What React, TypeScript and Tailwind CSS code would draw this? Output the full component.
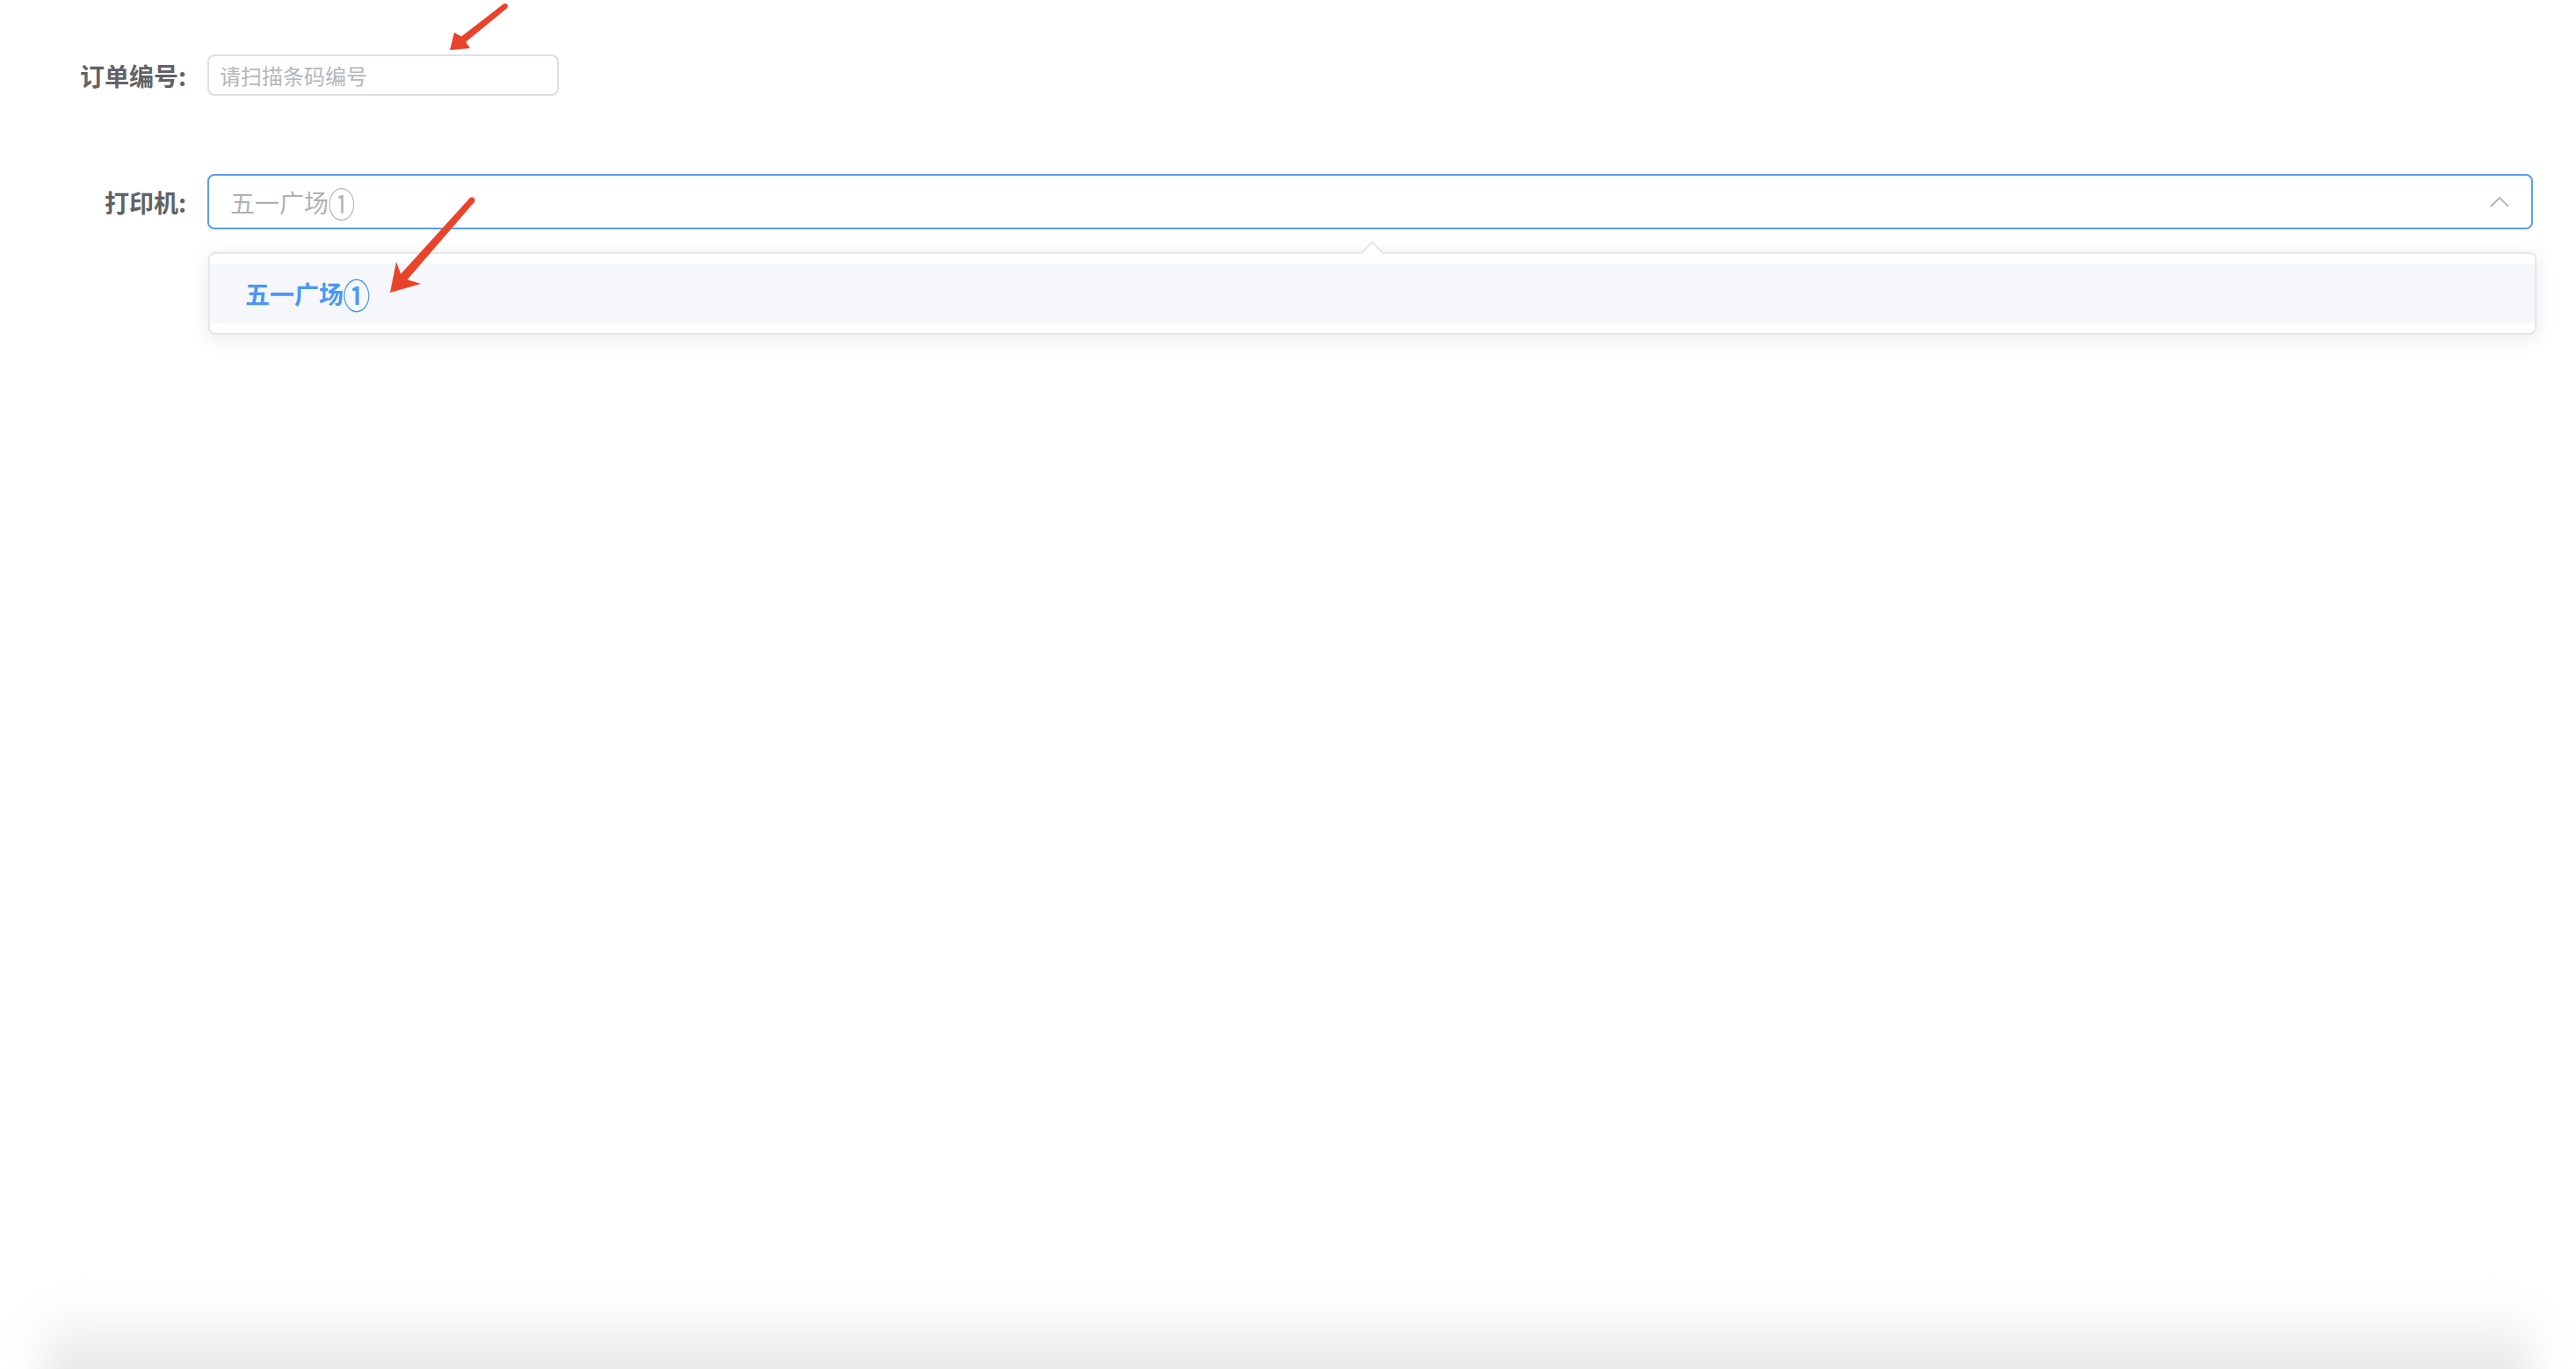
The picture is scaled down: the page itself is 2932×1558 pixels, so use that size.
import React from "react";

const font = { fontFamily: '"Noto Sans CJK SC", "Noto Sans", sans-serif' };

function Circled() {
  return (
    <span className="ml-[1px] inline-block origin-center scale-x-[1.1] scale-y-[1.4]">
      ①
    </span>
  );
}

function Annotations() {
  return (
    <svg
      className="absolute left-0 top-0 pointer-events-none"
      width="700"
      height="400"
      viewBox="0 0 700 400"
    >
      <g fill="#e9442b">
        <polygon points="573.1,4.6 525.2,41.5 517,37 512,57 535,55 530.2,47.7 576.9,9.4" />
        <circle cx="575" cy="7" r="3" />
        <polygon points="534.4,225.7 456.2,311.7 451,298 444,333 479,323 463.6,318.3 539.6,230.3" />
        <circle cx="537" cy="228" r="3.5" />
      </g>
    </svg>
  );
}

export default function App() {
  return (
    <div
      className="relative flex h-screen w-full flex-col overflow-hidden bg-white"
      style={font}
    >
      <div className="flex flex-col pt-[62px]">
        {/* Row 1 */}
        <div className="flex items-center">
          <div className="w-[236px] pr-[24px] text-right text-[28px] font-bold leading-none text-[#606266]">
            订单编号:
          </div>
          <div className="flex h-[47px] w-[400px] items-center rounded-[8px] border-2 border-[#dcdfe6] px-[12px] text-[24px] text-[#b4b7bd]">
            请扫描条码编号
          </div>
        </div>

        {/* Row 2 */}
        <div className="mt-[89px] flex items-center">
          <div className="w-[236px] pr-[24px] text-right text-[28px] font-bold leading-none text-[#606266]">
            打印机:
          </div>
          <div className="flex h-[63px] w-[2647px] items-center justify-between rounded-[8px] border-2 border-[#5b9cf5] pl-[24px] pr-[25px] text-[28px] text-[#aeb1b7]">
            <span>
              五一广场
              <Circled />
            </span>
            <svg width="22" height="13" viewBox="0 0 22 13" fill="none">
              <polyline
                points="1,12 11,2 21,12"
                stroke="#b0b3b9"
                strokeWidth="1.8"
                strokeLinejoin="miter"
              />
            </svg>
          </div>
        </div>

        {/* Dropdown */}
        <div className="ml-[237px] mt-[26px] w-[2650px]">
          <div className="relative rounded-[8px] border-2 border-[#e4e7ed] bg-white py-[11px] shadow-[0_4px_24px_rgba(0,0,0,0.09)]">
            <div className="absolute left-[1314px] top-[-11px] h-[18px] w-[18px] rotate-45 border-l-2 border-t-2 border-[#e4e7ed] bg-white" />
            <div className="flex h-[68px] items-center bg-[#f5f7fa] pl-[40px] text-[28px] font-bold text-[#4a97f5]">
              <span>
                五一广场
                <Circled />
              </span>
            </div>
          </div>
        </div>
      </div>

      <div className="mx-[50px] mt-auto mb-[-40px] h-[120px] bg-linear-to-b from-white to-[#dedede] blur-[22px]" />

      <Annotations />
    </div>
  );
}
